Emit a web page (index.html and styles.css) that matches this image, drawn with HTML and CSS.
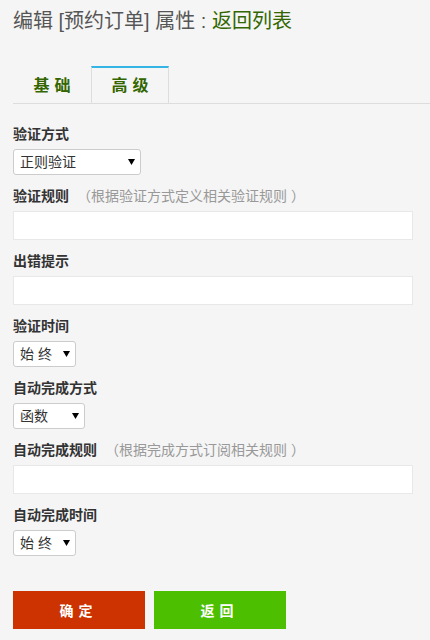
FILE: index.html
```html
<!DOCTYPE html>
<html lang="zh-CN">
<head>
    <meta charset="UTF-8">
    <meta name="viewport" content="width=device-width, initial-scale=1.0">
    <title>编辑 [预约订单] 属性</title>
    <link rel="stylesheet" href="styles.css">
</head>
<body>
    <div class="page">
        <h1 class="title">编辑 [预约订单] 属性 : <a href="#">返回列表</a></h1>

        <ul class="tabs">
            <li><a href="#">基础</a></li>
            <li class="active"><a href="#">高级</a></li>
        </ul>

        <form class="form">
            <div class="field">
                <label>验证方式</label>
                <span class="select w-128">
                    <select>
                        <option>正则验证</option>
                    </select>
                    <svg class="caret" width="7" height="6" viewBox="0 0 7 6"><path d="M0 0h7L3.5 6z"/></svg>
                </span>
            </div>

            <div class="field">
                <label>验证规则 <span class="hint">（根据验证方式定义相关验证规则<span class="close">）</span></span></label>
                <input type="text" class="text">
            </div>

            <div class="field">
                <label>出错提示</label>
                <input type="text" class="text">
            </div>

            <div class="field">
                <label>验证时间</label>
                <span class="select w-63">
                    <select>
                        <option>始 终</option>
                    </select>
                    <svg class="caret" width="7" height="6" viewBox="0 0 7 6"><path d="M0 0h7L3.5 6z"/></svg>
                </span>
            </div>

            <div class="field">
                <label>自动完成方式</label>
                <span class="select w-72">
                    <select>
                        <option>函数</option>
                    </select>
                    <svg class="caret" width="7" height="6" viewBox="0 0 7 6"><path d="M0 0h7L3.5 6z"/></svg>
                </span>
            </div>

            <div class="field">
                <label>自动完成规则 <span class="hint">（根据完成方式订阅相关规则<span class="close">）</span></span></label>
                <input type="text" class="text">
            </div>

            <div class="field">
                <label>自动完成时间</label>
                <span class="select w-63">
                    <select>
                        <option>始 终</option>
                    </select>
                    <svg class="caret" width="7" height="6" viewBox="0 0 7 6"><path d="M0 0h7L3.5 6z"/></svg>
                </span>
            </div>

            <div class="actions">
                <button type="submit" class="btn btn-ok">确定</button>
                <button type="button" class="btn btn-back">返回</button>
            </div>
        </form>
    </div>
</body>
</html>
```

FILE: styles.css
```css
body {
    margin: 0;
    padding: 0;
    background-color: #f5f5f5;
    color: #333;
    font-family: "Liberation Sans", "Noto Sans CJK SC", sans-serif;
    font-size: 14px;
}

.page {
    padding: 7px 0 0 13px;
}

.title {
    margin: 0;
    font-size: 20px;
    font-weight: normal;
    line-height: 28px;
    color: #555;
}

.title a {
    color: #336600;
    text-decoration: none;
}

.tabs {
    list-style: none;
    display: flex;
    margin: 31px 0 0 0;
    padding: 0;
    border-bottom: 1px solid #ddd;
}

.tabs li {
    width: 78px;
    box-sizing: border-box;
    border-top: 2px solid transparent;
    text-align: center;
}

.tabs li.active {
    border-top-color: #33b5e5;
    border-left: 1px solid #ddd;
    border-right: 1px solid #ddd;
}

.tabs a {
    display: block;
    line-height: 35px;
    font-size: 16px;
    font-weight: bold;
    letter-spacing: 5px;
    padding-left: 5px;
    color: #336600;
    text-decoration: none;
}

.form {
    margin-top: 20px;
}

.field {
    margin-bottom: 11px;
}

.field label {
    display: block;
    line-height: 20px;
    margin-bottom: 5px;
    font-weight: bold;
    color: #333;
}

.hint {
    margin-left: 4px;
    font-weight: normal;
    color: #999;
}

.hint .close {
    margin-left: 4px;
}

.text {
    display: block;
    width: 400px;
    height: 29px;
    box-sizing: border-box;
    margin: 0;
    border: 1px solid #e8e8e8;
    background: #fff;
    outline: none;
}

.select {
    position: relative;
    display: inline-block;
    vertical-align: top;
}

.select select {
    appearance: none;
    -webkit-appearance: none;
    display: block;
    width: 100%;
    height: 26px;
    box-sizing: border-box;
    margin: 0;
    padding: 0 0 0 6px;
    border: 1px solid #ccc;
    border-radius: 3px;
    background: #fff;
    color: #333;
    font-family: inherit;
    font-size: 14px;
}

.select .caret {
    position: absolute;
    right: 6px;
    top: 10px;
    fill: #000;
}

.w-128 { width: 128px; }
.w-63 { width: 63px; }
.w-72 { width: 72px; }

.actions {
    display: flex;
    gap: 9px;
    margin-top: 35px;
}

.btn {
    width: 132px;
    height: 38px;
    border: none;
    color: #fff;
    font-family: inherit;
    font-size: 14px;
    font-weight: bold;
    letter-spacing: 5px;
    padding-left: 5px;
    cursor: pointer;
}

.btn-ok {
    background-color: #cc3300;
}

.btn-back {
    background-color: #4cbf00;
}
```
